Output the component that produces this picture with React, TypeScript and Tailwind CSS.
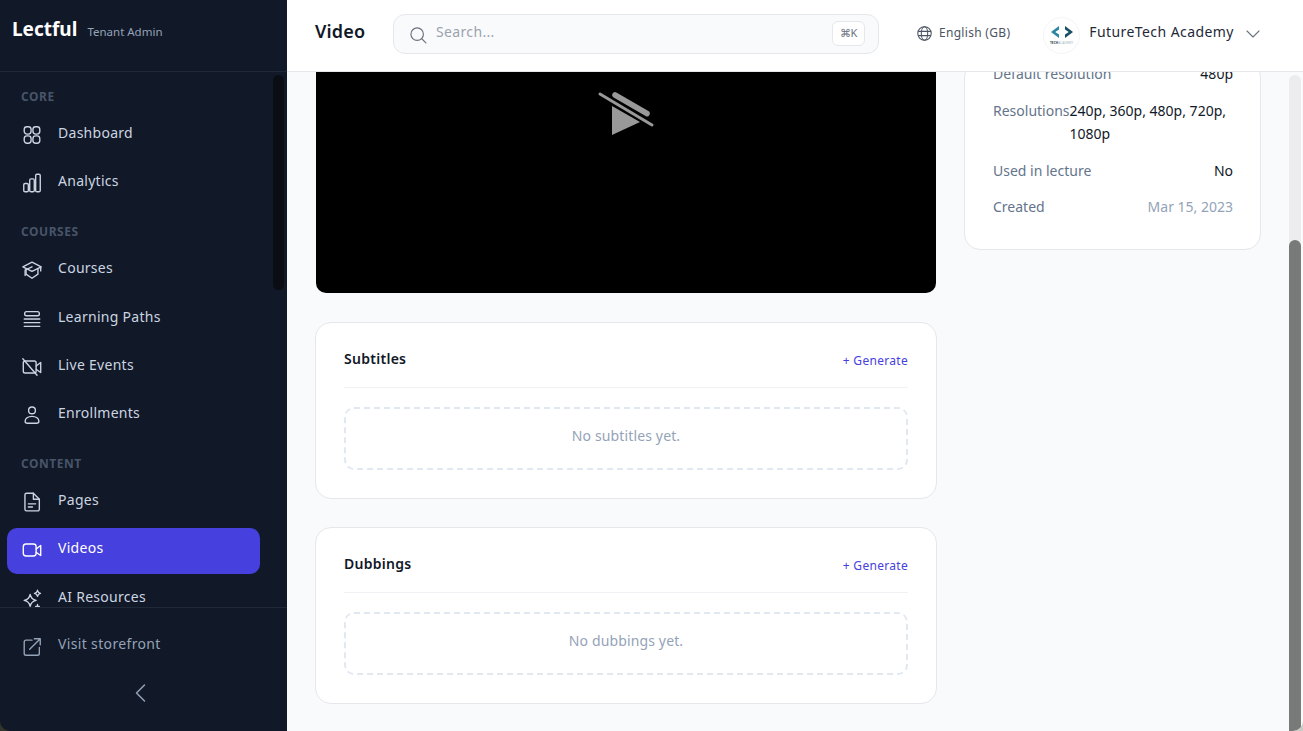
import React from "react";

const S = ({ children }: { children: React.ReactNode }) => (
  <svg viewBox="0 0 24 24" fill="none" stroke="currentColor" strokeWidth="1.5" strokeLinecap="round" strokeLinejoin="round" className="w-[22px] h-[22px] shrink-0">
    {children}
  </svg>
);

const icons: Record<string, React.ReactNode> = {
  dashboard: (
    <S>
      <rect x="3.5" y="3" width="7.5" height="8" rx="3" />
      <rect x="13" y="3" width="7.5" height="8" rx="3" />
      <rect x="3.5" y="13" width="7.5" height="8" rx="3" />
      <rect x="13" y="13" width="7.5" height="8" rx="3" />
    </S>
  ),
  analytics: (
    <S>
      <rect x="3" y="12.500" width="5" height="9" rx="1.4" />
      <rect x="9.500" y="7.500" width="5" height="14" rx="1.4" />
      <rect x="16" y="2.500" width="5" height="19" rx="1.4" />
    </S>
  ),
  courses: (
    <S>
      <path d="M12 3.500 22 8.500 12 13.500 2 8.500Z" />
      <path d="M5.500 11v5.500L12 21l6.500-4.500V11" />
      <path d="M21.500 9v4" />
      <path d="M12 8.500 4.500 12v6" />
    </S>
  ),
  paths: (
    <S>
      <rect x="4" y="4" width="16" height="4.5" rx="2" />
      <path d="M3.5 12h17M3.5 16h17M3.5 20h17" />
    </S>
  ),
  live: (
    <S>
      <rect x="2.5" y="5.5" width="14" height="13" rx="2" />
      <path d="m16.5 11 5-4v11l-5-3.5" />
      <path d="M2 3 17.5 21" />
    </S>
  ),
  enroll: (
    <S>
      <circle cx="12" cy="7" r="3.7" />
      <path d="M12 13.5c-4.5 0-7.5 2.4-7.5 5.2 0 1.3 1 2.3 2.4 2.3h10.2c1.4 0 2.4-1 2.4-2.3 0-2.8-3-5.2-7.5-5.2Z" />
    </S>
  ),
  pages: (
    <S>
      <path d="M6 2.5h7.5L20 9v11a1.7 1.7 0 0 1-1.7 1.7H6A1.7 1.7 0 0 1 4.3 20V4.2A1.7 1.7 0 0 1 6 2.5Z" />
      <path d="M13.5 2.5V9H20" />
      <path d="M8 14h8M8 17.5h4.5" />
    </S>
  ),
  videos: (
    <S>
      <rect x="2.5" y="5.5" width="14" height="13" rx="3" />
      <path d="m16.5 11 5-4v11l-5-3.5" />
    </S>
  ),
  ai: (
    <S>
      <path d="M10 7c.8 4 2.5 5.8 6.5 6.5-4 .8-5.7 2.5-6.5 6.5-.8-4-2.5-5.7-6.5-6.5C7.5 12.800 9.200 11 10 7Z" />
      <path d="M18 2.500c.4 2 1.300 2.900 3.300 3.300-2 .4-2.900 1.300-3.300 3.300-.4-2-1.300-2.900-3.300-3.300 2-.4 2.900-1.300 3.300-3.300Z" />
      <path d="M18 18v4M16 20h4" />
    </S>
  ),
  visit: (
    <S>
      <path d="M12 4.500H5.500a2 2 0 0 0-2 2V19a2 2 0 0 0 2 2H18a2 2 0 0 0 2-2v-6.500" />
      <path d="M9.500 14.500 21 3M14.500 3H21v6.500" />
    </S>
  ),
};

const Label = ({ children, first }: { children: string; first?: boolean }) => (
  <div className={`${first ? "" : "mt-[17px]"} mb-2 pl-[14px] h-4 leading-4 text-xs font-bold tracking-[0.045em] text-[#475569]`}>{children}</div>
);

const Item = ({ icon, label, active }: { icon: string; label: string; active?: boolean }) => (
  <div className={`flex items-center gap-[15px] h-[46px] pl-[14px] w-[253px] rounded-[10px] text-sm tracking-[0.02em] ${active ? "bg-[#4640de] text-white" : "text-[#cbd5e1]"}`}>
    <span className="-mt-[2px]">{icons[icon]}</span>
    <span className="-mt-[6px]">{label}</span>
  </div>
);

const Card = ({ title, empty }: { title: string; empty: string }) => (
  <section className="h-[177px] rounded-2xl border border-[#e5e7eb] bg-white px-7 pt-[26px]">
    <div className="flex justify-between items-center h-[39px] border-b border-[#f0f1f4] pb-[18px]">
      <h2 className="text-sm font-semibold tracking-[0.02em] text-[#111827]">{title}</h2>
      <button className="text-xs tracking-[0.025em] text-[#4640de] mt-1">+ Generate</button>
    </div>
    <div className="mt-[19px] h-[63px] pb-[5px] rounded-[10px] border-2 border-dashed border-[#e2e8f0] flex items-center justify-center text-sm tracking-[0.01em] text-[#94a3b8]">
      {empty}
    </div>
  </section>
);

const Row = ({ k, children }: { k: string; children: React.ReactNode }) => (
  <div className="flex justify-between leading-[23.5px] text-sm">
    <span className="text-[#64748b] whitespace-nowrap">{k}</span>
    {children}
  </div>
);

export default function App() {
  return (
    <div className="h-screen bg-[linear-gradient(90deg,#34352a_50%,#c9c9c6_50%)] overflow-hidden">
      <div className="flex h-full overflow-hidden rounded-b-[10px] font-['Noto_Sans','Open_Sans',sans-serif]">
        <aside className="w-[287px] shrink-0 h-full bg-[#111827] flex flex-col relative">
          <div className="h-[72px] shrink-0 border-b border-[#1f2937] flex items-start pl-3 pt-4 gap-[10px]">
            <span className="text-[19px] leading-[27px] font-bold text-white">Lectful</span>
            <span className="text-[11.5px] leading-[32px] text-[#94a3b8]">Tenant Admin</span>
          </div>
          <nav className="flex-1 min-h-0 overflow-hidden pt-[17px] pl-[7px]">
            <Label first>CORE</Label>
            <div className="flex flex-col gap-[2.3px]">
              <Item icon="dashboard" label="Dashboard" />
              <Item icon="analytics" label="Analytics" />
            </div>
            <Label>COURSES</Label>
            <div className="flex flex-col gap-[2.3px]">
              <Item icon="courses" label="Courses" />
              <Item icon="paths" label="Learning Paths" />
              <Item icon="live" label="Live Events" />
              <Item icon="enroll" label="Enrollments" />
            </div>
            <Label>CONTENT</Label>
            <div className="flex flex-col gap-[2.3px]">
              <Item icon="pages" label="Pages" />
              <Item icon="videos" label="Videos" active />
              <Item icon="ai" label="AI Resources" />
            </div>
          </nav>
          <div className="h-[124px] shrink-0 border-t border-[#1f2937]">
            <div className="pl-[7px] mt-[13px] text-[#94a3b8]">
              <div className="flex items-center gap-[15px] h-[46px] pl-[14px] text-sm tracking-[0.025em]">
                <span className="mt-[6px]">{icons.visit}</span>
                <span>Visit storefront</span>
              </div>
            </div>
            <div className="flex justify-center mt-[14px] pr-[6px]">
              <svg viewBox="0 0 24 24" fill="none" stroke="#94a3b8" strokeWidth="1.5" strokeLinecap="round" strokeLinejoin="round" className="w-6 h-6">
                <path d="m15.500 4-8 8 8 8" />
              </svg>
            </div>
          </div>
          <div className="absolute left-[273px] top-[75px] w-[11px] h-[215px] rounded-full bg-[#0a0d14]" />
        </aside>

        <div className="flex-1 min-w-0 flex flex-col bg-[#f9fafb] relative">
          <header className="h-[72px] shrink-0 z-10 bg-white border-b border-[#e5e7eb] flex items-center pl-7 pb-[6px]">
            <h1 className="w-[78px] text-lg font-semibold tracking-[0.01em] text-[#111827] -mt-[3px]">Video</h1>
            <div className="w-[486px] h-10 shrink-0 rounded-xl border border-[#e5e7eb] bg-[#f9fafb] flex items-center pl-[14px] pr-[13px] mt-[2px]">
              <svg viewBox="0 0 24 24" fill="none" stroke="#6b7280" strokeWidth="1.400" strokeLinecap="round" className="w-[20px] h-[20px] mt-[2px]">
                <circle cx="11" cy="11" r="7.500" />
                <path d="m16.500 16.500 5 5" />
              </svg>
              <span className="ml-2 -mt-[3px] text-sm tracking-[0.025em] text-[#9ca3af]">Search...</span>
              <span className="ml-auto w-[33px] h-[25px] rounded-md border border-[#e5e7eb] bg-white flex items-center justify-center text-[11px] text-[#6b7280]">⌘K</span>
            </div>
            <svg viewBox="0 0 24 24" fill="none" stroke="#4b5563" strokeWidth="1.500" className="w-[17px] h-[17px] ml-[37px] mt-[2px]">
              <circle cx="12" cy="12" r="9.500" />
              <ellipse cx="12" cy="12" rx="4.500" ry="9.500" />
              <path d="M3 9h18M3 15h18" />
            </svg>
            <span className="ml-[6px] text-xs tracking-[0.025em] text-[#4b5563] mt-[1px]">English (GB)</span>
            <svg viewBox="0 0 37 37" className="w-[37px] h-[37px] ml-[33px] shrink-0 mt-[6px]">
              <circle cx="18.500" cy="18.500" r="18" fill="#fff" stroke="#f3f4f6" />
              <path d="M16 9 8 15l8 6v-3.400L12.200 15l3.800-2.600Z" fill="#2b86a0" />
              <path d="M22 9l8 6-8 6v-3.400l3.800-2.600-3.800-2.600Z" fill="#174f63" />
              <text x="18.500" y="27" textAnchor="middle" fontSize="3.200" fill="#a3b8c0">
                <tspan fill="#1f3d4a" fontWeight="700">TECH</tspan>ACADEMY
              </text>
            </svg>
            <span className="ml-[9px] text-sm tracking-[0.03em] text-[#1f2937] -mt-[2px] whitespace-nowrap">FutureTech Academy</span>
            <svg viewBox="0 0 24 24" fill="none" stroke="#6b7280" strokeWidth="1.500" strokeLinecap="round" strokeLinejoin="round" className="w-[18px] h-[18px] ml-[10px] mt-[3px]">
              <path d="m4 8 8 8 8-8" />
            </svg>
          </header>

          <main className="flex-1 min-h-0 overflow-hidden flex items-start gap-[27px] pl-7">
            <div className="w-[622px] shrink-0 flex flex-col gap-7">
              <div className="h-[221px] mb-[1px] rounded-b-[10px] bg-black ml-[1px] w-[620px] flex justify-center">
                <svg viewBox="0 0 60 46" className="w-[60px] h-[46px] mt-[19px]">
                  <path d="M16 15 44 31 16 44Z" fill="#999" />
                  <path d="M19 4 51 22.500" stroke="#999" strokeWidth="5.500" strokeLinecap="round" />
                  <path d="M4 3 56 34" stroke="#000" strokeWidth="6" strokeLinecap="round" />
                  <path d="M4 3 56 34" stroke="#999" strokeWidth="3" strokeLinecap="round" />
                </svg>
              </div>
              <Card title="Subtitles" empty="No subtitles yet." />
              <Card title="Dubbings" empty="No dubbings yet." />
            </div>
            <div className="w-[297px] shrink-0 -mt-[11px] rounded-2xl border border-[#e5e7eb] bg-white pl-7 pr-[27px] pb-[30px] flex flex-col gap-[13px]">
              <Row k="Default resolution"><span className="text-[#111827]">480p</span></Row>
              <Row k="Resolutions"><span className="text-[#111827] w-[164px] shrink-0">240p, 360p, 480p, 720p, 1080p</span></Row>
              <Row k="Used in lecture"><span className="text-[#111827]">No</span></Row>
              <Row k="Created"><span className="text-[#94a3b8]">Mar 15, 2023</span></Row>
            </div>
          </main>

          <div className="absolute right-[2px] top-[75px] bottom-0 w-3 rounded-t-full bg-[#ececee]">
            <div className="absolute left-0 right-0 top-[165px] bottom-0 rounded-t-full bg-[#777a78]" />
          </div>
        </div>
      </div>
    </div>
  );
}
